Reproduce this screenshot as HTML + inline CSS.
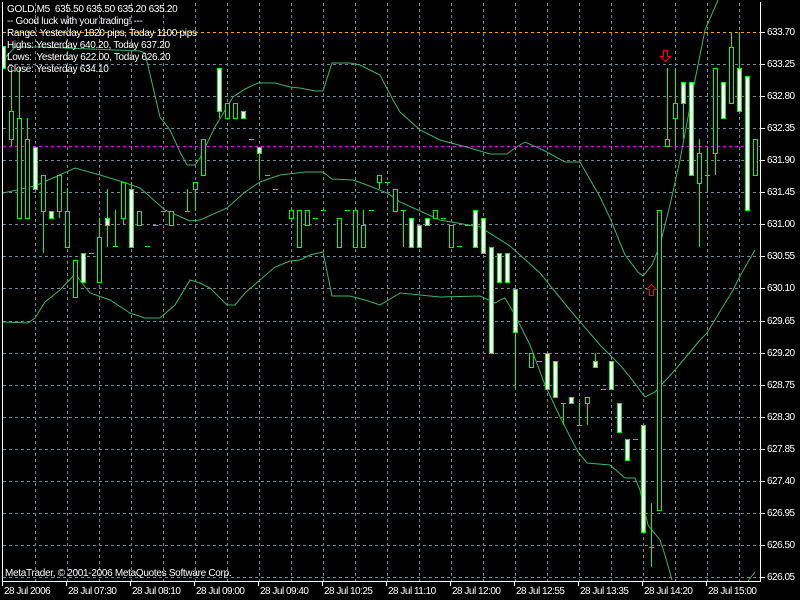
<!DOCTYPE html>
<html><head><meta charset="utf-8"><style>
html,body{margin:0;padding:0;background:#000;}
body{width:800px;height:600px;overflow:hidden;position:relative;font-family:"Liberation Sans",sans-serif;}
svg{position:absolute;left:0;top:0;}
.t{position:absolute;color:#fff;font-size:10px;line-height:12px;white-space:pre;letter-spacing:-0.5px;}
.h{letter-spacing:-0.3px;}
</style></head><body>
<svg width="800" height="600" shape-rendering="crispEdges">
<g stroke="#778899" stroke-width="1" stroke-dasharray="3,3" fill="none">
<path d="M35.5 3V581M67.5 3V581M99.5 3V581M131.5 3V581M163.5 3V581M195.5 3V581M227.5 3V581M259.5 3V581M291.5 3V581M323.5 3V581M355.5 3V581M387.5 3V581M419.5 3V581M451.5 3V581M483.5 3V581M515.5 3V581M547.5 3V581M579.5 3V581M611.5 3V581M643.5 3V581M675.5 3V581M707.5 3V581M739.5 3V581"/>
<path d="M3 64.5H760M3 96.5H760M3 128.5H760M3 160.5H760M3 192.5H760M3 224.5H760M3 256.5H760M3 288.5H760M3 321.5H760M3 353.5H760M3 385.5H760M3 417.5H760M3 449.5H760M3 481.5H760M3 513.5H760M3 545.5H760M3 577.5H760"/>
</g>
<path d="M3 32.5H760" stroke="#ffa500" stroke-dasharray="3,3"/>
<path d="M3 146.5H760" stroke="#ff00ff" stroke-dasharray="3,3"/>
<g fill="none" stroke="#3cb371" stroke-width="1" shape-rendering="auto">
<polyline points="3,60 15,47 40,47 140,51 145,53 160,117 170,130 180,152 187,165 195,165 200,158 215,127 233,97 245,89 258,83 275,83 290,87 300,88 315,91 323,91 332,63 350,63 360,65 380,75 393,100 400,112 420,130 440,140 470,148 490,154 507,154 515,148 525,142 543,150 565,162 580,162 600,197 610,218 625,255 638,272 643,276 652,265 660,245 670,205 680,160 695,80 705,30 718,0"/>
<polyline points="3,193 35,186 75,168 100,175 120,181 140,188 165,210 190,221 200,220 227,208 245,192 260,182 280,175 305,172 323,172 332,179 353,180 367,185 387,193 400,202 440,220 480,227 510,246 540,273 570,310 600,345 620,365 630,377 645,397 655,392 675,370 700,340 707,333 733,290 740,276 755,250"/>
<polyline points="3,322 28,323 35,318 45,302 60,290 75,274 90,293 110,300 130,313 145,318 160,318 175,305 190,280 200,283 210,288 227,305 235,305 245,293 260,280 275,267 290,261 300,260 310,255 323,252 332,296 350,296 365,300 380,305 400,293 440,297 480,296 495,303 500,300 505,298 515,315 530,345 545,385 560,417 578,452 587,463 610,465 625,478 635,478 640,490 648,525 660,540 665,555 672,580"/>
<polyline points="748,581 755,572"/>
</g>
<g stroke="#00ff00" stroke-width="1" fill="none">
<path d="M11.5 67V146M19.5 67V218M27.5 118V218M35.5 147V190M43.5 175V253M59.5 175V218M67.5 188V247M99.5 218V282M107.5 189V247M115.5 210V246M123.5 182V225M131.5 182V247M187.5 189V211M195.5 182V211M219.5 68V118M259.5 147V178M363.5 210V247M379.5 175V189M403.5 210V247M515.5 289V389M563.5 403V425M579.5 403V425M587.5 397V425M595.5 353V367M651.5 503V567M667.5 68V146M675.5 68V146M683.5 82V139M699.5 139V247M707.5 147V191M715.5 68V175M731.5 32V103M739.5 32V111"/>
<path d="M89 253.5H94M113 246.5H118M145 246.5H150M153 225.5H158M161 211.5H166M185 211.5H190M249 139.5H254M265 175.5H270M273 189.5H278M313 218.5H318M321 210.5H326M345 210.5H350M369 210.5H374M385 182.5H390M401 210.5H406M441 218.5H446M457 246.5H462M465 225.5H470M537 361.5H542M561 403.5H566M577 425.5H582M601 389.5H606M633 439.5H638M649 547.5H654M705 175.5H710"/>
</g>
<g stroke="#00ff00" stroke-width="1" fill="#000">
<rect x="9.5" y="111.5" width="4" height="28"/><rect x="17.5" y="118.5" width="4" height="100"/><rect x="25.5" y="139.5" width="4" height="79"/>
<rect x="41.5" y="175.5" width="4" height="36"/><rect x="57.5" y="175.5" width="4" height="36"/><rect x="65.5" y="211.5" width="4" height="36"/>
<rect x="73.5" y="260.5" width="4" height="37"/><rect x="97.5" y="237.5" width="4" height="45"/><rect x="121.5" y="182.5" width="4" height="36"/>
<rect x="137.5" y="211.5" width="4" height="14"/><rect x="169.5" y="211.5" width="4" height="14"/><rect x="193.5" y="182.5" width="4" height="7"/>
<rect x="201.5" y="139.5" width="4" height="36"/><rect x="225.5" y="103.5" width="4" height="15"/><rect x="233.5" y="103.5" width="4" height="15"/>
<rect x="289.5" y="210.5" width="4" height="8"/><rect x="297.5" y="210.5" width="4" height="37"/><rect x="305.5" y="210.5" width="4" height="15"/>
<rect x="337.5" y="218.5" width="4" height="29"/><rect x="353.5" y="210.5" width="4" height="37"/><rect x="361.5" y="225.5" width="4" height="22"/>
<rect x="377.5" y="175.5" width="4" height="7"/><rect x="393.5" y="189.5" width="4" height="22"/><rect x="433.5" y="210.5" width="4" height="8"/>
<rect x="449.5" y="225.5" width="4" height="22"/><rect x="529.5" y="353.5" width="4" height="14"/><rect x="585.5" y="397.5" width="4" height="6"/>
<rect x="657.5" y="210.5" width="4" height="300"/><rect x="665.5" y="139.5" width="4" height="7"/><rect x="673.5" y="103.5" width="4" height="15"/>
<rect x="697.5" y="153.5" width="4" height="30"/><rect x="713.5" y="68.5" width="4" height="85"/><rect x="729.5" y="47.5" width="4" height="56"/>
<rect x="753.5" y="139.5" width="4" height="36"/>
</g>
<g stroke="#00ff00" stroke-width="1" fill="#fff">
<rect x="2.5" y="46.5" width="3" height="22"/><rect x="33.5" y="147.5" width="4" height="42"/><rect x="49.5" y="211.5" width="4" height="7"/>
<rect x="81.5" y="253.5" width="4" height="29"/><rect x="105.5" y="218.5" width="4" height="7"/><rect x="129.5" y="189.5" width="4" height="58"/>
<rect x="217.5" y="68.5" width="4" height="43"/><rect x="241.5" y="111.5" width="4" height="7"/><rect x="257.5" y="147.5" width="4" height="6"/>
<rect x="409.5" y="218.5" width="4" height="29"/><rect x="417.5" y="225.5" width="4" height="22"/><rect x="425.5" y="218.5" width="4" height="7"/>
<rect x="473.5" y="210.5" width="4" height="37"/><rect x="481.5" y="218.5" width="4" height="35"/><rect x="489.5" y="247.5" width="4" height="106"/>
<rect x="497.5" y="253.5" width="4" height="29"/><rect x="505.5" y="253.5" width="4" height="29"/><rect x="513.5" y="289.5" width="4" height="43"/>
<rect x="545.5" y="353.5" width="4" height="36"/><rect x="553.5" y="361.5" width="4" height="36"/><rect x="569.5" y="397.5" width="4" height="6"/>
<rect x="593.5" y="361.5" width="4" height="6"/><rect x="609.5" y="361.5" width="4" height="28"/><rect x="617.5" y="403.5" width="4" height="29"/>
<rect x="625.5" y="439.5" width="4" height="21"/><rect x="641.5" y="425.5" width="4" height="107"/><rect x="681.5" y="82.5" width="4" height="21"/>
<rect x="689.5" y="82.5" width="4" height="93"/><rect x="721.5" y="82.5" width="4" height="36"/><rect x="737.5" y="68.5" width="4" height="43"/>
<rect x="745.5" y="76.5" width="4" height="134"/>
</g>
<g stroke="#ff0000" fill="#000" shape-rendering="auto">
<path d="M663.5 50.5H667.5V56.5H670.5L665.5 61.5L660.5 56.5H663.5Z"/>
<path d="M649.5 295.5H653.5V289.5H656.5L651.5 284.5L646.5 289.5H649.5Z"/>
</g>
<g stroke="#fff" fill="none">
<path d="M2.5 2V581.5H760.5V2"/>
<path d="M761 32.5H765M761 64.5H765M761 96.5H765M761 128.5H765M761 160.5H765M761 192.5H765M761 224.5H765M761 256.5H765M761 288.5H765M761 321.5H765M761 353.5H765M761 385.5H765M761 417.5H765M761 449.5H765M761 481.5H765M761 513.5H765M761 545.5H765M761 577.5H765"/>
<path d="M2.5 582V586M66.5 582V586M130.5 582V586M194.5 582V586M258.5 582V586M322.5 582V586M386.5 582V586M450.5 582V586M514.5 582V586M578.5 582V586M642.5 582V586M706.5 582V586"/>
</g>
</svg>
<div class="t h" style="left:7px;top:4px">GOLD,M5  635.50 635.50 635.20 635.20</div>
<div class="t h" style="left:7px;top:16px">-- Good luck with your trading! ---</div>
<div class="t h" style="left:7px;top:28px">Range: Yesterday 1820 pips, Today 1100 pips</div>
<div class="t h" style="left:7px;top:40px">Highs: Yesterday 640.20, Today 637.20</div>
<div class="t h" style="left:7px;top:52px">Lows:  Yesterday 622.00, Today 626.20</div>
<div class="t h" style="left:7px;top:64px">Close: Yesterday 634.10</div>
<div class="t h" style="left:5px;top:568px">MetaTrader, © 2001-2006 MetaQuotes Software Corp.</div>
<div class="t" style="left:767px;top:27px">633.70</div>
<div class="t" style="left:767px;top:59px">633.25</div>
<div class="t" style="left:767px;top:91px">632.80</div>
<div class="t" style="left:767px;top:123px">632.35</div>
<div class="t" style="left:767px;top:155px">631.90</div>
<div class="t" style="left:767px;top:187px">631.45</div>
<div class="t" style="left:767px;top:219px">631.00</div>
<div class="t" style="left:767px;top:251px">630.55</div>
<div class="t" style="left:767px;top:283px">630.10</div>
<div class="t" style="left:767px;top:316px">629.65</div>
<div class="t" style="left:767px;top:348px">629.20</div>
<div class="t" style="left:767px;top:380px">628.75</div>
<div class="t" style="left:767px;top:412px">628.30</div>
<div class="t" style="left:767px;top:444px">627.85</div>
<div class="t" style="left:767px;top:476px">627.40</div>
<div class="t" style="left:767px;top:508px">626.95</div>
<div class="t" style="left:767px;top:540px">626.50</div>
<div class="t" style="left:767px;top:572px">626.05</div>
<div class="t" style="left:4px;top:586px">28 Jul 2006</div>
<div class="t" style="left:68px;top:586px">28 Jul 07:30</div>
<div class="t" style="left:132px;top:586px">28 Jul 08:10</div>
<div class="t" style="left:196px;top:586px">28 Jul 09:00</div>
<div class="t" style="left:260px;top:586px">28 Jul 09:40</div>
<div class="t" style="left:324px;top:586px">28 Jul 10:25</div>
<div class="t" style="left:388px;top:586px">28 Jul 11:10</div>
<div class="t" style="left:452px;top:586px">28 Jul 12:00</div>
<div class="t" style="left:516px;top:586px">28 Jul 12:55</div>
<div class="t" style="left:580px;top:586px">28 Jul 13:35</div>
<div class="t" style="left:644px;top:586px">28 Jul 14:20</div>
<div class="t" style="left:708px;top:586px">28 Jul 15:00</div>
</body></html>
